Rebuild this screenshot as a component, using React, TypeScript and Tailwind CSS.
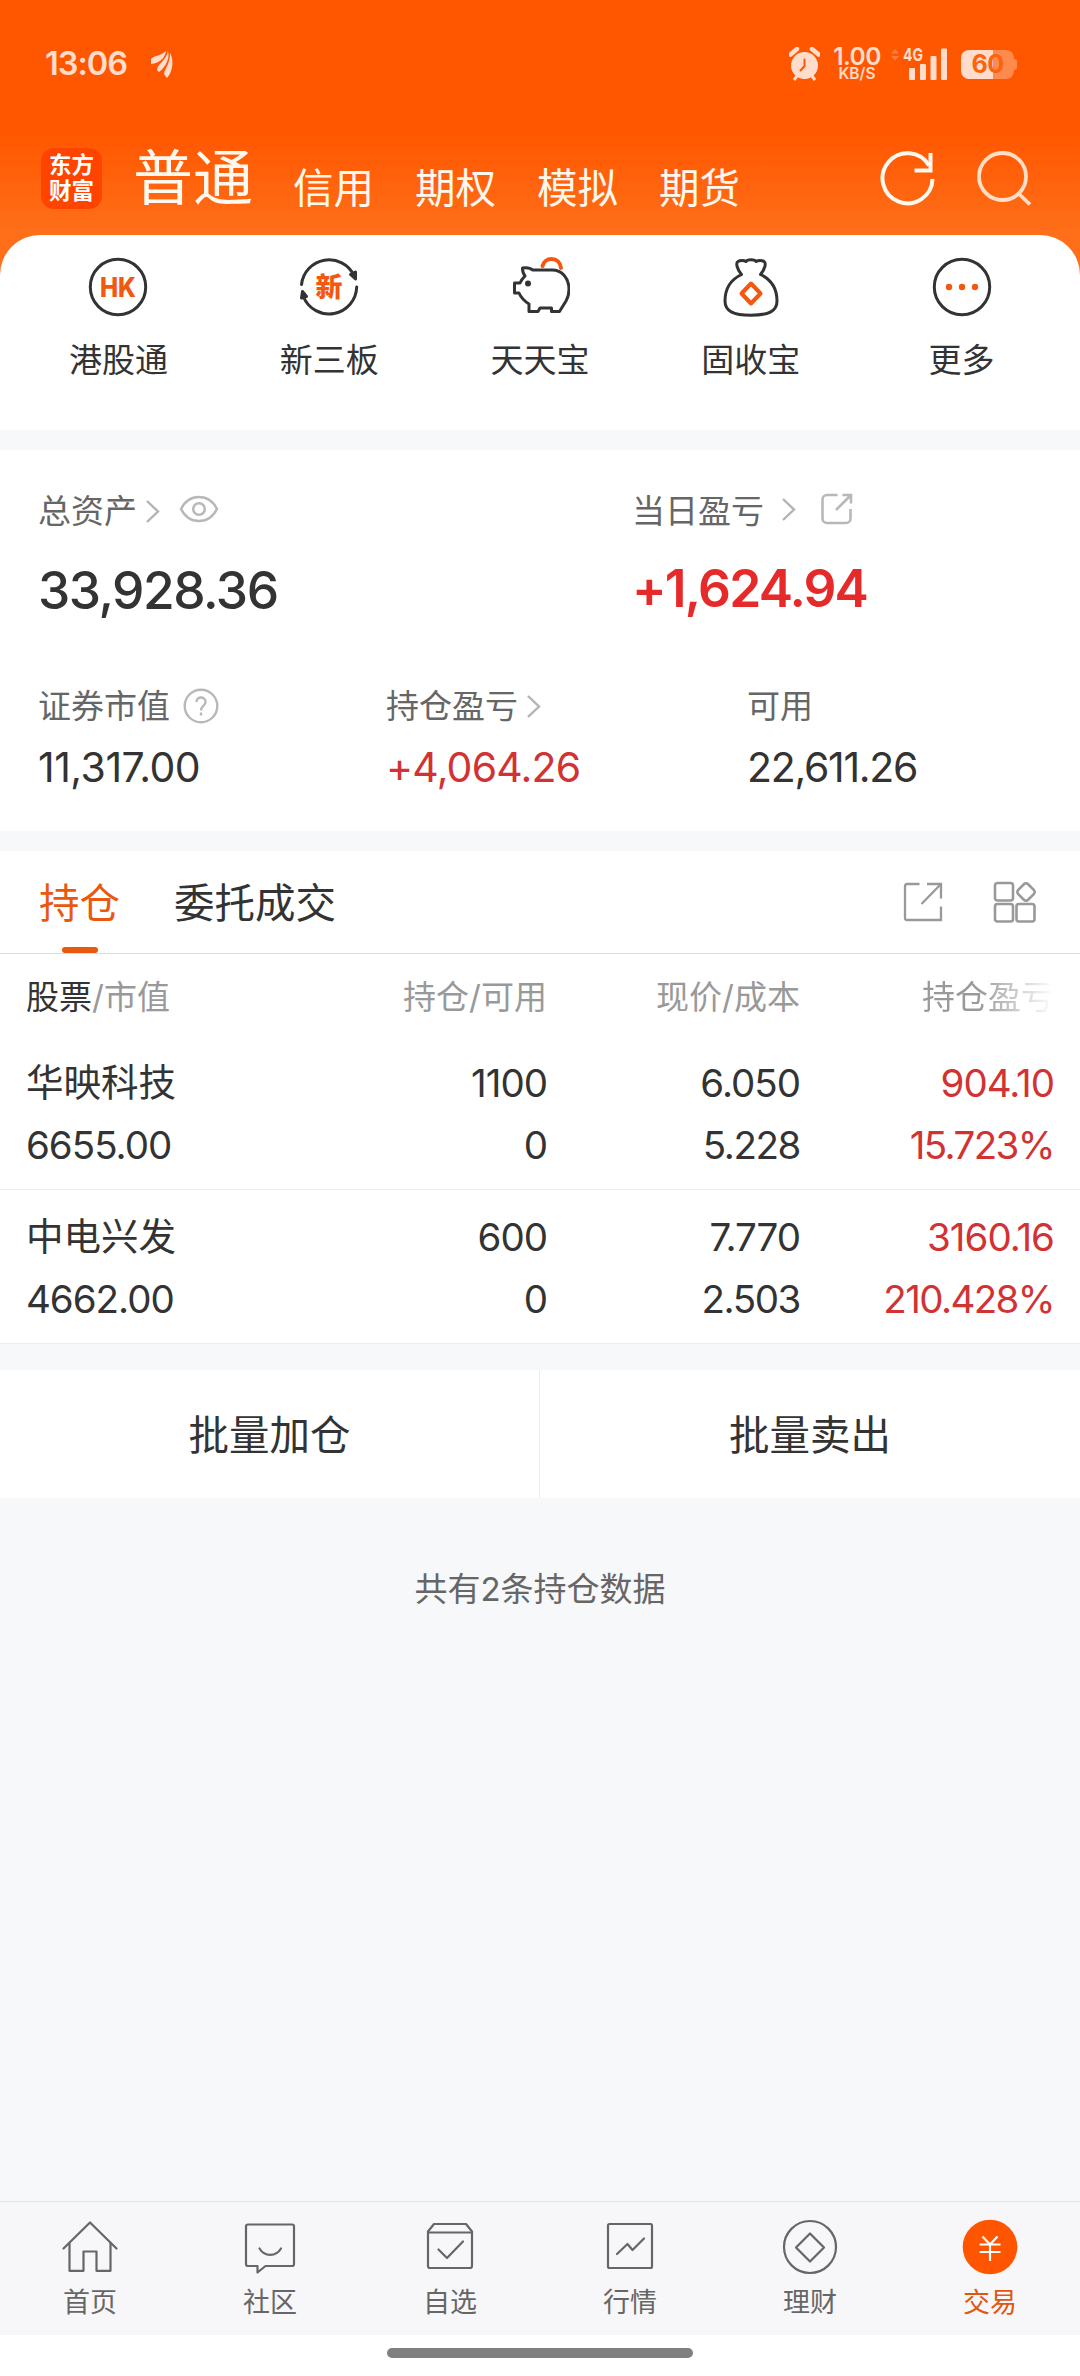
import type { ReactNode } from "react";
import clsx from "clsx";

const QUICK = [
  { label: "港股通", icon: <HkIcon /> },
  { label: "新三板", icon: <NewBoardIcon /> },
  { label: "天天宝", icon: <PiggyIcon /> },
  { label: "固收宝", icon: <BagIcon /> },
  { label: "更多", icon: <MoreIcon /> },
];

const HOLDINGS = [
  { name: "华映科技", value: "6655.00", qty: "1100", usable: "0", price: "6.050", cost: "5.228", pnl: "904.10", rate: "15.723%" },
  { name: "中电兴发", value: "4662.00", qty: "600", usable: "0", price: "7.770", cost: "2.503", pnl: "3160.16", rate: "210.428%" },
];

const NAV = [
  { label: "首页", icon: <HomeIcon /> },
  { label: "社区", icon: <ChatIcon /> },
  { label: "自选", icon: <PickIcon /> },
  { label: "行情", icon: <MarketIcon /> },
  { label: "理财", icon: <WealthIcon /> },
  { label: "交易", icon: <TradeIcon />, active: true },
];

/* ---------- quick entry icons, 60x60 ---------- */

function QuickSvg({ children }: { children: ReactNode }) {
  return (
    <svg width="60" height="60" viewBox="0 0 60 60" fill="none" stroke="#333" strokeWidth="3" strokeLinejoin="round" strokeLinecap="round">
      {children}
    </svg>
  );
}

function HkIcon() {
  return (
    <QuickSvg>
      <circle cx="30" cy="30" r="27.7" />
      <text x="30" y="39.5" textAnchor="middle" fontSize="27" fontWeight="800" fill="#f4570f" stroke="none" textLength="36" lengthAdjust="spacingAndGlyphs">HK</text>
    </QuickSvg>
  );
}

function NewBoardIcon() {
  return (
    <QuickSvg>
      <path d="M2.5 27.5A27.7 27.7 0 0 1 55 18.5" />
      <path d="M57.7 30A27.7 27.7 0 0 1 4.5 40" />
      <path d="M51.5 17.5l5-2.5 0 7z" fill="#333" />
      <path d="M2.5 41l1-6.500 4 5z" fill="#333" />
      <text x="30" y="39.500" textAnchor="middle" fontSize="27" fontWeight="900" fill="#f4570f" stroke="none">新</text>
    </QuickSvg>
  );
}

function PiggyIcon() {
  return (
    <QuickSvg>
      <path d="M32.500 9c1-4 4.500-7 9-7 5 0 9 3.500 9.500 9" stroke="#f4570f" strokeWidth="4" />
      <path d="M42 13H22.500c-2-2-6-2.500-10-2 0 3 .5 5.500 2.500 8-2 2-4 4.500-5 7H4.500v10H9c2 4.500 6 8.500 10 11v7.500h9l2-3.500h11.500v3.500h8l6.500-10.500c2-3.500 3-7 3-11.500C59 21 52 13 42 13z" />
      <circle cx="18" cy="26.500" r="2" fill="#333" strokeWidth="2" />
    </QuickSvg>
  );
}

function BagIcon() {
  return (
    <QuickSvg>
      <path d="M20.500 17.500C16 12 14.500 6 17 4.500c2-1.500 6-1.500 8 0 1-2.500 9-2.500 10 0 2-1.500 6-1.500 8 0 2.500 1.500 1 7.500-3.500 13C50 22.500 56 32 56 44c0 10-8 14.200-26 14.200S4 54 4 44c0-12 6-21.500 16.500-26.500z" />
      <path d="M30 26.500l9.500 10-9.500 10-9.500-10z" stroke="#f4570f" strokeWidth="4" />
    </QuickSvg>
  );
}

function MoreIcon() {
  return (
    <QuickSvg>
      <circle cx="30" cy="30" r="27.700" />
      <g fill="#f4570f" stroke="none">
        <circle cx="17" cy="30" r="3.200" />
        <circle cx="30" cy="30" r="3.200" />
        <circle cx="43" cy="30" r="3.200" />
      </g>
    </QuickSvg>
  );
}

/* ---------- bottom nav icons, 60x60 ---------- */

function NavSvg({ children }: { children: ReactNode }) {
  return (
    <svg width="60" height="60" viewBox="0 0 60 60" fill="none" stroke="#666" strokeWidth="2.200" strokeLinejoin="round" strokeLinecap="round">
      {children}
    </svg>
  );
}

function HomeIcon() {
  return (
    <NavSvg>
      <path d="M3.500 31.500L30 5.500l26.500 26" />
      <path d="M9.500 26.500v27.300h14V34.500h13v19.300h14V26.500" />
    </NavSvg>
  );
}

function ChatIcon() {
  return (
    <NavSvg>
      <path d="M8 7.500h44a2 2 0 0 1 2 2V47a2 2 0 0 1-2 2H25.500L17.500 55.500V49H8a2 2 0 0 1-2-2V9.500a2 2 0 0 1 2-2z" />
      <path d="M19.500 31.500c5 8.500 16.500 8.500 21.500 0" />
    </NavSvg>
  );
}

function PickIcon() {
  return (
    <NavSvg>
      <path d="M8 14.500L14 7h32l6 7.500V49a2 2 0 0 1-2 2H10a2 2 0 0 1-2-2z" />
      <path d="M8 15.500h44M18.500 32.500l8.500 8.500L43 24.500" />
    </NavSvg>
  );
}

function MarketIcon() {
  return (
    <NavSvg>
      <rect x="8" y="7" width="44" height="44" rx="1.500" />
      <path d="M17 37l10.500-10 5 6L44 21.500" />
    </NavSvg>
  );
}

function WealthIcon() {
  return (
    <NavSvg>
      <circle cx="30" cy="30" r="26" />
      <path d="M30 16.500L44 30.500 30 44.500 16 30.500z" />
    </NavSvg>
  );
}

function TradeIcon() {
  return (
    <NavSvg>
      <circle cx="30" cy="30" r="27.300" fill="#ff5500" stroke="none" />
      <path d="M22.500 19.500l7.500 8 7.500-8M19.500 27.500h21M19.500 35h21M30 27.500V44" stroke="#fff" strokeLinecap="butt" />
    </NavSvg>
  );
}

function Chevron({ className }: { className?: string }) {
  return (
    <svg width="14" height="23" viewBox="0 0 14 23" fill="none" stroke="#b3b3b3" strokeWidth="2.400" className={className}>
      <path d="M1 1l11 10.500L1 22" />
    </svg>
  );
}

/* ---------- sections ---------- */

function StatusBar() {
  return (
    <div className="flex h-[128px] items-center pl-[45px] pr-[66px] text-[#ffdccb]">
      <span className="w-[81px] text-[32.5px] leading-none font-semibold tracking-[-1px]">13:06</span>
      <svg width="24" height="28" viewBox="0 0 24 28" className="ml-[24px]" fill="#ffdccb">
        <path d="M1 9C5 5 11 6 16 1c-1 7-6 12-15 13z" />
        <path d="M7 20C8 13 16 11 18 1c2 7-2 16-9 21z" />
        <path d="M14 24c1-6 6-10 6-21 4 7 3 18-3 25z" />
      </svg>
      <svg width="31" height="34" viewBox="0 0 31 34" className="ml-auto" fill="#ffdccb">
        <circle cx="15.500" cy="18.500" r="13.500" />
        <path d="M1.500 7.500L8 2M29.500 7.500L23 2" stroke="#ffdccb" strokeWidth="4.500" strokeLinecap="round" />
        <path d="M8 29l-3 4M23 29l3 4" stroke="#ffdccb" strokeWidth="3" />
        <path d="M15.500 12.500v6.500l-4 4.500" fill="none" stroke="#ff5700" strokeWidth="2" strokeLinecap="round" />
      </svg>
      <div className="ml-[12px] flex w-[50px] flex-col items-center font-semibold">
        <span className="text-[24.5px] leading-[19px] tracking-[-0.6px]">1.00</span>
        <span className="text-[15.5px] leading-[15px]">KB/S</span>
      </div>
      <svg width="58" height="34" viewBox="0 0 58 34" className="ml-[8px] overflow-visible" fill="#ffdccb">
        <path d="M1 6.500L5 2l4 4.500zM1 9l4 4.500L9 9z" opacity=".3" />
        <text x="13" y="14" fontSize="18" fontWeight="700" textLength="20" lengthAdjust="spacingAndGlyphs">4G</text>
        <rect x="19" y="21" width="6" height="12" rx="1" />
        <rect x="30" y="17" width="6" height="16" rx="1" />
        <rect x="40.500" y="9" width="6" height="24" rx="1" />
        <rect x="51" y="1.500" width="6" height="31.500" rx="1" />
      </svg>
      <div className="relative ml-[13px] flex h-[29px] w-[53px] items-center justify-center rounded-[8px] bg-[linear-gradient(90deg,#ffdccb_32px,#ff8a4d_32px)]">
        <span className="text-[25px] leading-none font-bold tracking-[-0.5px] text-[#f9640f]">60</span>
        <span className="absolute top-[9px] -right-[3px] h-[11px] w-[3px] rounded-r-sm bg-[#ff8a4d]" />
      </div>
    </div>
  );
}

function Header() {
  return (
    <header className="h-[285px] bg-[linear-gradient(180deg,#ff5700_0px,#ff5700_132px,#ff6f1a_235px)] text-[#fff8ee]">
      <StatusBar />
      <div className="flex h-[100px] items-center pl-[41px] pr-[48px]">
        <div className="flex h-[61px] w-[61px] flex-col items-center justify-center rounded-[13px] bg-[#ff4400] text-[22.5px] leading-[26px] font-bold text-white">
          <span>东方</span>
          <span>财富</span>
        </div>
        <span className="ml-[31px] text-[60px] leading-none">普通</span>
        <div className="ml-[40px] flex gap-[41px] pt-[22px] text-[40.5px] leading-none">
          <span>信用</span>
          <span>期权</span>
          <span>模拟</span>
          <span>期货</span>
        </div>
        <svg width="56" height="56" viewBox="0 0 56 56" fill="none" stroke="#fff8ee" strokeWidth="4" className="ml-auto">
          <path d="M53.500 29A25 25 0 1 1 50 15.500" />
          <path d="M51.500 3v17.500H35.500" />
        </svg>
        <svg width="56" height="56" viewBox="0 0 56 56" fill="none" stroke="#ffdfc8" strokeWidth="3.800" className="ml-[41px]">
          <circle cx="26.500" cy="26.500" r="23.500" />
          <path d="M42.500 43.500L54 54.500" />
        </svg>
      </div>
    </header>
  );
}

function QuickEntries() {
  return (
    <nav className="-mt-[50px] grid h-[195px] grid-cols-5 rounded-t-[40px] bg-white px-[13px] pt-[22px]">
      {QUICK.map((q) => (
        <div key={q.label} className="flex flex-col items-center">
          {q.icon}
          <span className="mt-[26px] text-[33px] leading-[34px]">{q.label}</span>
        </div>
      ))}
    </nav>
  );
}

function Assets() {
  return (
    <section className="mt-[20px] h-[381px] bg-white pl-[38px] text-[#666]">
      <div className="flex">
        <div className="w-[595px]">
          <div className="flex h-[64px] items-end text-[33px] leading-none">
            <div className="flex h-[6px] w-full items-center">
              <span>总资产</span>
              <Chevron className="ml-[9px]" />
              <svg width="40" height="28" viewBox="0 0 40 28" fill="none" stroke="#b8b8b8" strokeWidth="2.500" className="-mt-[4px] ml-[19px]">
                <path d="M2 14C10-2 30-2 38 14 30 30 10 30 2 14z" />
                <circle cx="20" cy="14" r="5.800" />
              </svg>
            </div>
          </div>
          <p className="mt-[49px] text-[51.5px] leading-[54px] font-medium tracking-[-1.5px] text-[#333]">33,928.36</p>
        </div>
        <div className="-ml-px">
          <div className="flex h-[64px] items-end text-[33px] leading-none">
            <div className="flex h-[6px] items-center">
              <span>当日盈亏</span>
              <Chevron className="-mt-[4px] ml-[18px]" />
              <svg width="34" height="34" viewBox="0 0 34 34" fill="none" stroke="#b8b8b8" strokeWidth="2.600" className="-mt-[4px] ml-[24px]">
                <path d="M17.500 3H7a4.500 4.500 0 0 0-4.500 4.500v19A4.500 4.500 0 0 0 7 31h19a4.500 4.500 0 0 0 4.500-4.500V17" />
                <path d="M22.500 3h8.500v8.500M31 3L16 18" />
              </svg>
            </div>
          </div>
          <p className="mt-[47px] text-[51.5px] leading-[54px] font-semibold tracking-[-1.8px] text-[#e62a2a]">+1,624.94</p>
        </div>
      </div>
      <div className="mt-[72px] flex text-[33px] leading-[34px]">
        <div className="w-[348px]">
          <div className="flex h-[34px] items-center">
            <span>证券市值</span>
            <svg width="36" height="36" viewBox="0 0 36 36" fill="none" stroke="#b8b8b8" strokeWidth="2.400" className="ml-[13px]">
              <circle cx="18" cy="18" r="16.300" />
              <path d="M13.500 14c0-6 9-6 9 0 0 4-4.500 4-4.500 8.500M18 24.500v3" />
            </svg>
          </div>
          <p className="mt-[22px] text-[41px] leading-[44px] tracking-[-0.5px] text-[#333]">11,317.00</p>
        </div>
        <div className="w-[361px]">
          <div className="flex h-[34px] items-center">
            <span>持仓盈亏</span>
            <Chevron className="ml-[9px]" />
          </div>
          <p className="mt-[22px] text-[41px] leading-[44px] tracking-[-0.8px] text-[#d23232]">+4,064.26</p>
        </div>
        <div>
          <div className="flex h-[34px] items-center">
            <span>可用</span>
          </div>
          <p className="mt-[22px] text-[41px] leading-[44px] tracking-[-1.3px] text-[#333]">22,611.26</p>
        </div>
      </div>
    </section>
  );
}

function Tabs() {
  return (
    <div className="flex h-[103px] items-center border-b border-[#dedede] pl-[39px] pr-[43px] text-[40.5px] leading-none">
      <span className="relative flex h-full items-center pt-[5px] text-[#e8590f]">
        持仓
        <span className="absolute bottom-0 left-[23px] h-[6px] w-[36px] rounded-full bg-[#e8590f]" />
      </span>
      <span className="ml-[54px] pt-[5px]">委托成交</span>
      <svg width="40" height="40" viewBox="0 0 40 40" fill="none" stroke="#999" strokeWidth="2.300" className="ml-auto">
        <path d="M16.500 2H4a2 2 0 0 0-2 2v32a2 2 0 0 0 2 2h34V24.500" />
        <path d="M24 2h14v14.500M38 2L18.500 22" />
      </svg>
      <svg width="44" height="42" viewBox="0 0 44 42" fill="none" stroke="#999" strokeWidth="2.600" className="ml-[50px]">
        <rect x="2" y="2" width="18" height="17.500" rx="2.500" />
        <rect x="2" y="23" width="18" height="17.500" rx="2.500" />
        <rect x="23.500" y="23" width="18" height="17.500" rx="2.500" />
        <rect x="26" y="4" width="14" height="14" rx="3" transform="rotate(45 33 11)" />
      </svg>
    </div>
  );
}

function Holdings() {
  return (
    <section className="mt-[20px] bg-white">
      <Tabs />
      <div className="grid h-[84px] grid-cols-[271px_250px_253px_1fr] items-center pt-[2px] pl-[26px] pr-[26px] text-right text-[33px] leading-none text-[#999]">
        <span className="text-left">
          <span className="text-[#333]">股票</span>/市值
        </span>
        <span>持仓/可用</span>
        <span>现价/成本</span>
        <span className="bg-[linear-gradient(90deg,#999_70%,#fff_100%)] bg-clip-text leading-[44px] text-transparent">持仓盈亏</span>
      </div>
      {HOLDINGS.map((h, i) => (
        <div
          key={h.name}
          className={clsx(
            "grid grid-cols-[271px_250px_253px_1fr] border-b border-[#ececec] px-[26px] text-right text-[38.5px] leading-[62px] tracking-[-1px]",
            i === 0 ? "h-[152px] pt-[14px]" : "h-[154px] pt-[16px]",
          )}
        >
          <div className="text-left">
            <p className="text-[37.5px] tracking-normal">{h.name}</p>
            <p>{h.value}</p>
          </div>
          <div>
            <p>{h.qty}</p>
            <p>{h.usable}</p>
          </div>
          <div>
            <p>{h.price}</p>
            <p className="tracking-[-1.4px]">{h.cost}</p>
          </div>
          <div className="text-[#d23232]">
            <p>{h.pnl}</p>
            <p className="tracking-[-1.6px]">{h.rate}</p>
          </div>
        </div>
      ))}
    </section>
  );
}

function BottomNav() {
  return (
    <footer className="mt-auto">
      <div className="grid h-[134px] grid-cols-6 border-t border-[#e3e3e5] bg-[#f7f7fa] pt-[15px]">
        {NAV.map((n) => (
          <div key={n.label} className={clsx("flex flex-col items-center", n.active ? "text-[#e0580f]" : "text-[#666]")}>
            {n.icon}
            <span className="mt-[12px] text-[27px] leading-[28px]">{n.label}</span>
          </div>
        ))}
      </div>
      <div className="flex h-[41px] justify-center bg-white pt-[13px]">
        <span className="h-[10px] w-[306px] rounded-full bg-[#808080]" />
      </div>
    </footer>
  );
}

export default function App() {
  return (
    <div className="flex h-[2376px] w-[1080px] flex-col overflow-hidden bg-[#f7f8fa] font-['Inter','Noto_Sans_CJK_SC',sans-serif] text-[#333]">
      <Header />
      <QuickEntries />
      <Assets />
      <Holdings />
      <div className="mt-[26px] grid h-[128px] grid-cols-2 bg-white text-[40.5px] leading-none">
        <button className="border-r border-[#ececec] pt-[5px]">批量加仓</button>
        <button className="pt-[5px]">批量卖出</button>
      </div>
      <p className="mt-[74px] text-center text-[33px] leading-[34px] text-[#666]">共有2条持仓数据</p>
      <BottomNav />
    </div>
  );
}
